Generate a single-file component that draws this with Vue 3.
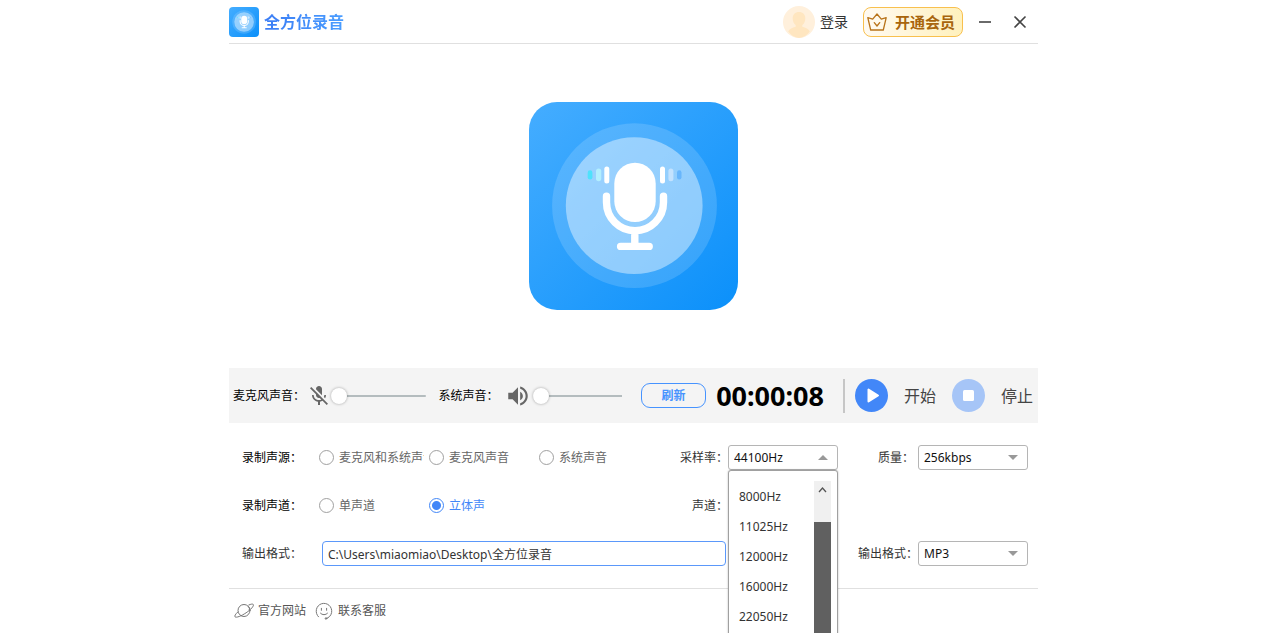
<script setup>
import { h, ref } from 'vue'

const source = ref('')
const channel = ref('stereo')
const rate = ref('44100Hz')
const quality = ref('256kbps')
const format = ref('MP3')
const channelMode = ref('')
const path = ref('C:\\Users\\miaomiao\\Desktop\\全方位录音')
const micVolume = ref(0)
const systemVolume = ref(0)

const sources = [
  { value: 'both', text: '麦克风和系统声音' },
  { value: 'mic', text: '麦克风声音' },
  { value: 'system', text: '系统声音' },
]
const channels = [
  { value: 'mono', text: '单声道' },
  { value: 'stereo', text: '立体声' },
]
const rates = ['8000Hz', '11025Hz', '12000Hz', '16000Hz', '22050Hz', '44100Hz']

const bar = (x, y, width, height, fill) =>
  h('rect', { x, y, width, height, rx: width / 2, fill })

const AppLogo = (props) =>
  h('svg', { viewBox: '0 0 209 208', 'aria-hidden': 'true' }, [
    h('defs', [
      h('linearGradient', { id: props.gid, x1: 0, y1: 0, x2: 1, y2: 1 }, [
        h('stop', { offset: '0', 'stop-color': '#45adff' }),
        h('stop', { offset: '1', 'stop-color': '#0b90fa' }),
      ]),
    ]),
    h('rect', { width: 209, height: 208, rx: 28, fill: `url(#${props.gid})` }),
    h('circle', { cx: 105.5, cy: 103.7, r: 82.4, fill: '#fff', 'fill-opacity': 0.15 }),
    h('circle', { cx: 105.2, cy: 103.7, r: 68.4, fill: '#fff', 'fill-opacity': 0.42 }),
    h('rect', { x: 85.3, y: 60.7, width: 41.4, height: 59.3, rx: 20.7, fill: '#fff' }),
    h('path', {
      d: 'M77.5 94.3v5.9a28.5 28.5 0 0 0 57 0v-5.9M105.8 129v15M91.6 144.4h28.6',
      fill: 'none', stroke: '#fff', 'stroke-width': 7.4, 'stroke-linecap': 'round',
    }),
    bar(75.3, 64.6, 5, 17, '#fff'),
    bar(67, 66.6, 5.3, 12.6, '#b3effe'),
    bar(58.7, 68.3, 4.7, 9.2, '#4fe2fc'),
    bar(131, 64.6, 5, 17, '#fff'),
    bar(139.4, 66.6, 5, 12.6, '#c3e2fe'),
    bar(148, 68.3, 4.5, 9.2, '#68b6fc'),
  ])
AppLogo.props = ['gid']

const Caret = (props) =>
  h('svg', { viewBox: '0 0 10 5', 'aria-hidden': 'true' }, [
    h('path', { d: props.up ? 'M0 5 5 0l5 5z' : 'M0 0h10L5 5z', fill: '#999' }),
  ])
Caret.props = { up: Boolean }
</script>

<template>
  <div class="page">
    <main class="app">
      <header class="header">
        <AppLogo class="brand-logo" gid="brandFill" />
        <h1 class="brand">全方位录音</h1>
        <a class="login" href="#">
          <svg class="avatar" viewBox="0 0 32 32" aria-hidden="true">
            <circle cx="16" cy="16" r="16" fill="#fff0dc" />
            <path d="M16 6c4 0 6.300 2.700 6.300 6.400 0 3-1.300 5.300-3 6.600v1.800c3.500 1 6.300 2.200 7.500 4.700A16 16 0 0 1 16 32 16 16 0 0 1 5.200 25.500c1.200-2.500 4-3.700 7.500-4.700V19c-1.700-1.300-3-3.600-3-6.600C9.700 8.700 12 6 16 6z" fill="#ffe6c0" />
          </svg>
          登录
        </a>
        <button class="vip" type="button">
          <svg class="crown" viewBox="0 0 20 18" fill="none" stroke="#b8731a" stroke-width="1.300" stroke-linejoin="round" stroke-linecap="round" aria-hidden="true">
            <path d="M10 1 14.300 6.200 19.200 4.600 16.300 17H3.700L.8 4.600l4.900 1.600z" />
            <path d="m7.300 9.600 2.700 3.400 2.700-3.400" />
          </svg>
          开通会员
        </button>
        <button class="win" type="button" aria-label="最小化">
          <svg viewBox="0 0 14 14" aria-hidden="true"><path d="M1 7h12" /></svg>
        </button>
        <button class="win" type="button" aria-label="关闭">
          <svg viewBox="0 0 14 14" aria-hidden="true"><path d="m1.500 1.500 11 11m0-11-11 11" /></svg>
        </button>
      </header>

      <section class="hero">
        <AppLogo class="hero-logo" gid="heroFill" />
      </section>

      <section class="toolbar">
        <label for="mic">麦克风声音：</label>
        <svg class="icon mic" viewBox="0 0 24 24" aria-hidden="true">
          <path d="M19 11h-1.700c0 .74-.16 1.430-.43 2.050l1.230 1.230c.56-.98.9-2.090.9-3.280zm-4.020.17c0-.06.02-.11.02-.17V5c0-1.660-1.340-3-3-3S9 3.340 9 5v.18l5.980 5.990zM4.270 3 3 4.270l6.010 6.010V11c0 1.660 1.330 3 2.990 3 .22 0 .44-.03.65-.08l1.660 1.660c-.71.33-1.500.52-2.310.52-2.760 0-5.300-2.100-5.300-5.100H5c0 3.410 2.720 6.230 6 6.720V21h2v-3.280c.91-.13 1.770-.45 2.540-.9L19.730 21 21 19.730z" />
        </svg>
        <input id="mic" v-model="micVolume" class="slider" type="range" min="0" max="100" />
        <label class="second" for="system">系统声音：</label>
        <svg class="icon speaker" viewBox="0 0 24 24" aria-hidden="true">
          <path d="M3 9v6h4l5 5V4L7 9H3zm13.500 3c0-1.770-1.020-3.290-2.500-4.030v8.050c1.480-.73 2.500-2.250 2.500-4.020zM14 3.230v2.060c2.890.86 5 3.540 5 6.710s-2.110 5.850-5 6.710v2.060c4.010-.91 7-4.490 7-8.770s-2.990-7.860-7-8.770z" />
        </svg>
        <input id="system" v-model="systemVolume" class="slider short" type="range" min="0" max="100" />
        <button class="refresh" type="button">刷新</button>
        <output class="timer">00:00:08</output>
        <span class="divider"></span>
        <button class="action" type="button">
          <svg viewBox="0 0 33 33" aria-hidden="true">
            <circle cx="16.500" cy="16.500" r="16.500" fill="#4287f8" />
            <path d="M13.500 10.500v12l9.500-6z" fill="#fff" stroke="#fff" stroke-width="2" stroke-linejoin="round" />
          </svg>
          开始
        </button>
        <button class="action" type="button">
          <svg viewBox="0 0 33 33" aria-hidden="true">
            <circle cx="16.500" cy="16.500" r="16.500" fill="#a6c5f7" />
            <rect x="11" y="11" width="11" height="11" rx="1.500" fill="#fff" />
          </svg>
          停止
        </button>
      </section>

      <form class="form" @submit.prevent>
        <span class="strong">录制声源：</span>
        <div class="radios">
          <label v-for="s in sources" :key="s.value" class="radio">
            <input v-model="source" type="radio" name="source" :value="s.value" />
            <span>{{ s.text }}</span>
          </label>
        </div>
        <label class="end" for="rate">采样率：</label>
        <div class="select">
          <select id="rate" v-model="rate">
            <option v-for="r in rates" :key="r">{{ r }}</option>
          </select>
          <Caret class="caret" up />
          <div class="popup">
            <ul>
              <li v-for="r in rates" :key="r">{{ r }}</li>
            </ul>
            <div class="scroll">
              <svg viewBox="0 0 9 6" aria-hidden="true"><path d="m1 5 3.500-4L8 5" /></svg>
              <div class="thumb"></div>
            </div>
          </div>
        </div>
        <label class="end inset" for="quality">质量：</label>
        <div class="select">
          <select id="quality" v-model="quality"><option>256kbps</option></select>
          <Caret class="caret" />
        </div>

        <span class="strong">录制声道：</span>
        <div class="radios">
          <label v-for="c in channels" :key="c.value" class="radio">
            <input v-model="channel" type="radio" name="channel" :value="c.value" />
            <span>{{ c.text }}</span>
          </label>
        </div>
        <label class="end" for="channel">声道：</label>
        <div class="select">
          <select id="channel" v-model="channelMode"></select>
        </div>
        <span></span>
        <span></span>

        <label for="path">输出格式：</label>
        <input id="path" v-model="path" class="path" type="text" />
        <span></span>
        <label class="end" for="format">输出格式：</label>
        <div class="select">
          <select id="format" v-model="format"><option>MP3</option></select>
          <Caret class="caret" />
        </div>
      </form>

      <footer class="footer">
        <a href="#">
          <svg viewBox="0 0 20 16" aria-hidden="true">
            <circle cx="10" cy="7.500" r="6" />
            <path d="M14.800 2c2.200-1 4-1.200 4.500-.5.900 1.300-2.300 5-7.200 8.300S2.200 15 1 13.800c-.7-.8.400-2.600 2.800-4.800M14.500 3.500c1 .8 1.300 2 .8 3" />
          </svg>
          官方网站
        </a>
        <a href="#">
          <svg viewBox="0 0 20 18" aria-hidden="true">
            <path d="M4.500 14.800A7.800 7.800 0 1 1 17.600 10.500c-.6 3.200-2.600 5.300-5.600 6M7.400 6.300v2M12.600 6.300v2M6.500 11.200c1.900 2 5.100 2 7 0" />
            <circle cx="12" cy="16.500" r=".8" />
          </svg>
          联系客服
        </a>
      </footer>
    </main>
  </div>
</template>

<style>
body {
  margin: 0;
  background: #fff;
}
</style>

<style scoped>
.page {
  box-sizing: border-box;
  min-height: 100vh;
  padding-left: 1px;
  overflow: hidden;
  background: #fff;
  color: #333;
  font: 12px/16px "Noto Sans", "Noto Sans CJK SC", sans-serif;
}
.app {
  max-width: 809px;
  margin: 0 auto;
}
button, input, select {
  font: inherit;
  color: inherit;
}
button {
  padding: 0;
  border: 0;
  background: none;
}
a {
  color: inherit;
  text-decoration: none;
}
.header {
  display: flex;
  align-items: center;
  height: 43px;
  border-bottom: 1px solid #e0e0e0;
}
.brand-logo {
  width: 30px;
  height: 30px;
}
.brand {
  margin: 0 auto 0 5px;
  font-size: 16px;
  line-height: 24px;
  font-weight: 700;
  color: transparent;
  background: linear-gradient(90deg, #3b7df5, #4a9dff);
  background-clip: text;
}
.login {
  display: flex;
  align-items: center;
  gap: 5px;
  margin-right: 15px;
  font-size: 14px;
}
.avatar {
  width: 32px;
  height: 32px;
}
.vip {
  display: flex;
  align-items: center;
  gap: 8px;
  box-sizing: border-box;
  width: 100px;
  height: 30px;
  margin-right: 15px;
  padding-left: 3px;
  border: 1px solid #f8c04e;
  border-radius: 8px;
  background: linear-gradient(90deg, #fffaf2, #fff1bd);
  color: #a8650d;
  font-size: 15px;
  font-weight: 700;
  white-space: nowrap;
}
.crown {
  width: 20px;
  height: 18px;
}
.win {
  display: flex;
  margin-right: 21px;
}
.win:last-child {
  margin-right: 11px;
}
.win svg {
  width: 14px;
  height: 14px;
  stroke: #444;
  stroke-width: 1.6;
}
.hero {
  display: grid;
  place-items: center;
  padding: 58px 0;
}
.hero-logo {
  width: 209px;
  height: 208px;
}
.toolbar {
  display: flex;
  align-items: center;
  height: 55px;
  padding: 0 5px 0 4px;
  background: #f4f4f4;
  color: #000;
  white-space: nowrap;
}
.second {
  margin-left: 13px;
}
.icon {
  flex: none;
  fill: #666;
}
.mic {
  width: 24px;
  height: 24px;
  margin: 0 0 0 2px;
}
.speaker {
  width: 26px;
  height: 26px;
  margin: 0 2px 0 6px;
}
.slider {
  flex: 19 1 0;
  min-width: 40px;
  height: 18px;
  margin: 0;
  appearance: none;
  background: linear-gradient(#b4bcbe, #b4bcbe) center / 100% 2px no-repeat;
}
.slider.short {
  flex-grow: 18;
}
.slider::-webkit-slider-thumb {
  appearance: none;
  width: 16px;
  height: 16px;
  border-radius: 50%;
  background: #fff;
  box-shadow: 0 0 3px rgba(0, 0, 0, 0.35);
}
.refresh {
  box-sizing: border-box;
  width: 65px;
  height: 25px;
  margin: 0 10px 0 19px;
  border: 1px solid #4693ff;
  border-radius: 9px;
  color: #4693ff;
  font-weight: 700;
}
.timer {
  font-size: 27px;
  line-height: 34px;
  font-weight: 700;
}
.divider {
  width: 2px;
  height: 34px;
  margin: 0 10px 0 19px;
  background: #c6c6c6;
}
.action {
  display: flex;
  align-items: center;
  gap: 16px;
  color: #444;
  font-size: 16px;
}
.action + .action {
  margin-left: 16px;
}
.action svg {
  width: 33px;
  height: 33px;
}
.form {
  display: grid;
  grid-template-columns: 77px 1fr 60px 110px 80px 110px;
  grid-auto-rows: 25px;
  row-gap: 23px;
  align-items: center;
  padding: 22px 10px 22px 13px;
  border-bottom: 1px solid #e0e0e0;
  white-space: nowrap;
}
.strong {
  color: #000;
}
.end {
  text-align: right;
}
.inset {
  padding-right: 4px;
}
.radios {
  display: grid;
  grid-template-columns: repeat(3, 110px);
}
.radio {
  display: flex;
  align-items: center;
  gap: 5px;
  color: #666;
}
.radio span {
  max-width: 85px;
  overflow: hidden;
}
.radio input {
  flex: none;
  box-sizing: border-box;
  width: 15px;
  height: 15px;
  margin: 0;
  appearance: none;
  border: 1px solid #a0a0a0;
  border-radius: 50%;
}
.radio input:checked {
  border-color: #4287f8;
  background: radial-gradient(circle, #4287f8 4px, #fff 5px);
}
.radio:has(input:checked) {
  color: #4287f8;
}
.select {
  position: relative;
}
.select select {
  display: block;
  box-sizing: border-box;
  width: 100%;
  height: 25px;
  padding: 0 5px;
  appearance: none;
  border: 1px solid #b5b5b5;
  border-radius: 3px;
  background: #fff;
  color: #111;
}
.caret {
  position: absolute;
  top: 10px;
  right: 10px;
  width: 10px;
  height: 5px;
  pointer-events: none;
}
.popup {
  position: absolute;
  z-index: 2;
  top: 100%;
  left: 0;
  right: 0;
  display: flex;
  box-sizing: border-box;
  height: 220px;
  padding: 10px 6px 10px 10px;
  overflow: hidden;
  border: 1px solid #a0a0a0;
  border-radius: 3px;
  background: #fff;
  box-shadow: 0 0 2px rgba(0, 0, 0, 0.3);
}
.popup ul {
  flex: 1;
  margin: 0;
  padding: 1px 0 0;
  list-style: none;
  line-height: 30px;
}
.scroll {
  display: flex;
  flex-direction: column;
  align-items: center;
  width: 17px;
  background: #f0f0f0;
}
.scroll svg {
  width: 9px;
  height: 6px;
  margin: 6px 0 29px;
  fill: none;
  stroke: #555;
  stroke-width: 1.3;
}
.thumb {
  flex: 1;
  width: 100%;
  background: #606060;
}
.path {
  grid-column: span 2;
  box-sizing: border-box;
  height: 25px;
  margin: 0 2px 0 3px;
  padding: 0 5px;
  border: 1px solid #5b98fa;
  border-radius: 4px;
  outline: none;
}
.footer {
  display: flex;
  align-items: center;
  gap: 8px;
  height: 44px;
  padding-left: 5px;
  color: #555;
}
.footer a {
  display: flex;
  align-items: center;
  gap: 4px;
}
.footer svg {
  width: 20px;
  height: 18px;
  fill: none;
  stroke: #777;
  stroke-width: 1;
  stroke-linecap: round;
}
</style>
